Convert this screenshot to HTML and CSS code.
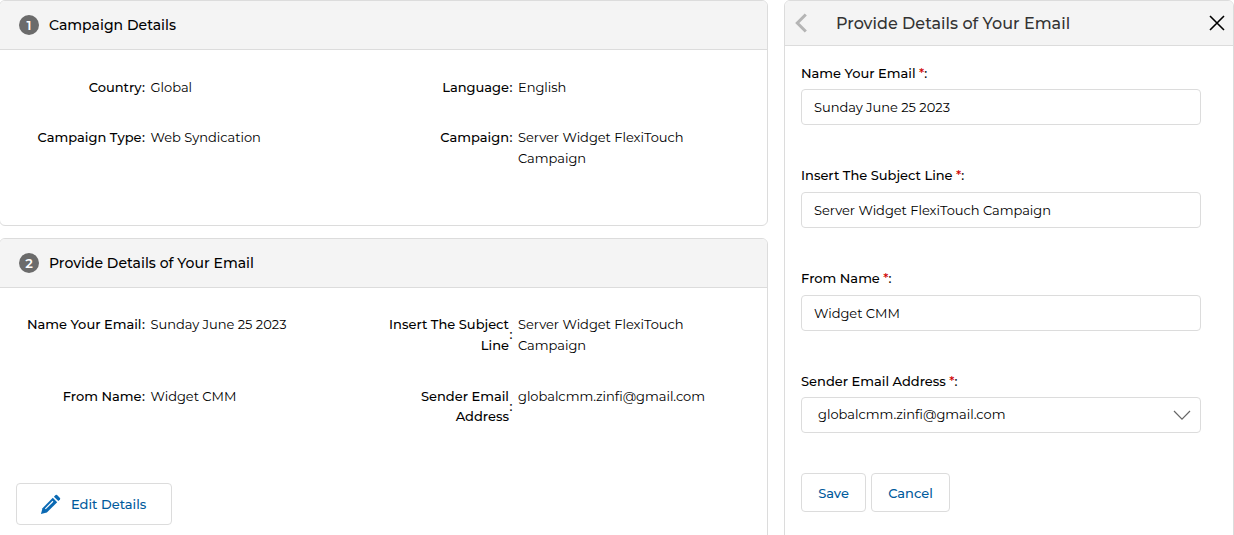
FILE: index.html
```html
<!DOCTYPE html>
<html lang="en">
    <head>
        <meta charset="utf-8">
        <meta name="viewport" content="width=device-width, initial-scale=1.0">
        <title>Provide Details of Your Email</title>
        <link rel="stylesheet" href="styles.css">
    </head>
    <body>
        <div class="page">
            <div class="summary">
                <section class="card campaign">
                    <div class="card-header">
                        <span class="step">1</span>
                        <h2>Campaign Details</h2>
                    </div>
                    <div class="details">
                        <div class="item">
                            <div class="name"><b>Country</b><i>:</i></div>
                            <span>Global</span>
                        </div>
                        <div class="item">
                            <div class="name"><b>Language</b><i>:</i></div>
                            <span>English</span>
                        </div>
                        <div class="item">
                            <div class="name"><b>Campaign Type</b><i>:</i></div>
                            <span>Web Syndication</span>
                        </div>
                        <div class="item">
                            <div class="name"><b>Campaign</b><i>:</i></div>
                            <span>Server Widget FlexiTouch Campaign</span>
                        </div>
                    </div>
                </section>

                <section class="card email">
                    <div class="card-header">
                        <span class="step">2</span>
                        <h2>Provide Details of Your Email</h2>
                    </div>
                    <div class="details">
                        <div class="item">
                            <div class="name"><b>Name Your Email</b><i>:</i></div>
                            <span>Sunday June 25 2023</span>
                        </div>
                        <div class="item">
                            <div class="name"><b>Insert The Subject Line</b><i>:</i></div>
                            <span>Server Widget FlexiTouch Campaign</span>
                        </div>
                        <div class="item">
                            <div class="name"><b>From Name</b><i>:</i></div>
                            <span>Widget CMM</span>
                        </div>
                        <div class="item">
                            <div class="name"><b>Sender Email Address</b><i>:</i></div>
                            <span>globalcmm.zinfi@gmail.com</span>
                        </div>
                    </div>
                    <button class="btn edit">
                        <svg width="21" height="21" viewBox="0 0 22 22">
                            <path d="M1 21l1.600-6.200L13.400 4l4.600 4.600L7.200 19.400z" fill="#0a69b3"/>
                            <path d="M14.600 2.800l1.700-1.700q.8-.6 1.600 0l3 3q.6.8 0 1.600l-1.700 1.700z" fill="#0a69b3"/>
                            <path d="M5.600 15.600L13.600 7.600" stroke="#fff" stroke-width="1.200"/>
                        </svg>
                        <span>Edit Details</span>
                    </button>
                </section>
            </div>

            <section class="card panel">
                <div class="panel-header">
                    <svg class="back" width="14" height="20" viewBox="0 0 14 20">
                        <path d="M11.800 1.500L3.300 10l8.500 8.500" fill="none" stroke="#b5b5b5" stroke-width="3"/>
                    </svg>
                    <h2>Provide Details of Your Email</h2>
                    <svg class="close" width="16" height="16" viewBox="0 0 16 16">
                        <path d="M1 1l14 14M15 1L1 15" stroke="#000" stroke-width="1.600"/>
                    </svg>
                </div>
                <form class="form">
                    <div class="field">
                        <label for="email-name">Name Your Email <em>*</em>:</label>
                        <input type="text" id="email-name" value="Sunday June 25 2023">
                    </div>
                    <div class="field">
                        <label for="subject">Insert The Subject Line <em>*</em>:</label>
                        <input type="text" id="subject" value="Server Widget FlexiTouch Campaign">
                    </div>
                    <div class="field">
                        <label for="from-name">From Name <em>*</em>:</label>
                        <input type="text" id="from-name" value="Widget CMM">
                    </div>
                    <div class="field sender">
                        <label>Sender Email Address <em>*</em>:</label>
                        <div class="select">
                            <span>globalcmm.zinfi@gmail.com</span>
                            <svg width="18" height="11" viewBox="0 0 18 11">
                                <path d="M1 1l8 8.200L17 1" fill="none" stroke="#666" stroke-width="1.200"/>
                            </svg>
                        </div>
                    </div>
                    <div class="actions">
                        <button type="button" class="btn save">Save</button>
                        <button type="button" class="btn cancel">Cancel</button>
                    </div>
                </form>
            </section>
        </div>
    </body>
</html>
```
FILE: styles.css
```css
* {
    box-sizing: border-box;
}
body {
    margin: 0;
    height: 535px;
    overflow: hidden;
    background: #fff;
    color: #000;
    font-family: Montserrat, Inter, "Liberation Sans", sans-serif;
    font-size: 13px;
    line-height: 20.8px;
}
h2 {
    margin: 0;
    font-weight: 500;
}
.page {
    display: flex;
    gap: 16px;
    margin-left: -1px;
}
.summary {
    width: 769px;
    display: flex;
    flex-direction: column;
    gap: 12px;
}
.card {
    border: 1px solid #dcdcdc;
    border-radius: 6px;
    overflow: hidden;
}
.campaign {
    height: 226px;
}
.email {
    height: 320px;
}
.card-header {
    display: flex;
    align-items: center;
    gap: 10px;
    height: 49px;
    padding-left: 19px;
    background: #f4f4f4;
    border-bottom: 1px solid #dcdcdc;
}
.card-header h2 {
    font-size: 14px;
    letter-spacing: 0.02px;
}
.step {
    width: 20px;
    height: 20px;
    border-radius: 50%;
    background: #6b6b6b;
    color: #fff;
    font-weight: 600;
    line-height: 21px;
    text-align: center;
}

/* label : value pairs */
.details {
    display: grid;
    grid-template-columns: 367.5px 367px;
    row-gap: 30px;
    margin-left: -0.5px;
    padding-top: 26px;
}
.campaign .details {
    padding-top: 27px;
    row-gap: 29px;
}
.item {
    display: flex;
    align-items: flex-start;
}
.name {
    display: flex;
    align-items: center;
    width: 146px;
    padding-left: 18px;
    font-weight: 500;
}
.name b {
    flex: 1;
    font-weight: 500;
    text-align: right;
}
.name i {
    width: 4px;
    font-style: normal;
    text-align: center;
}
.item span {
    width: 195px;
    margin-left: 5px;
    letter-spacing: -0.02px;
}

.btn {
    height: 39px;
    padding: 1px 0 0;
    border: 1px solid #dcdcdc;
    border-radius: 4px;
    background: #fff;
    color: #005a9c;
    font: inherit;
    font-weight: 500;
}
.edit {
    display: flex;
    align-items: center;
    gap: 10px;
    width: 156px;
    height: 42px;
    margin: 56px 0 0 16px;
    padding: 0 0 0 23px;
}

.panel {
    width: 450px;
    height: 546px;
}
.panel-header {
    display: flex;
    align-items: center;
    height: 45px;
    padding: 0 8px 0 9px;
    background: #f4f4f4;
    border-bottom: 1px solid #dcdcdc;
}
.panel-header h2 {
    flex: 1;
    margin-left: 28px;
    padding-top: 2px;
    color: #333;
    font-size: 16px;
    letter-spacing: 0.02px;
}
.form {
    padding: 17px 32px 0 16px;
}
.field {
    display: flow-root;
    height: 103px;
}
.field label {
    display: block;
    height: 26px;
    font-weight: 500;
}
.field + .field label {
    height: 27px;
    margin-top: -1px;
}
.field em {
    color: #d00000;
    font-style: normal;
}
.field input, .select {
    display: block;
    width: 100%;
    height: 36px;
    padding: 0 12px;
    border: 1px solid #dcdcdc;
    border-radius: 4px;
    background: #fff;
    color: #000;
    font-family: inherit;
    font-size: 13px;
    letter-spacing: -0.02px;
}
.field .select {
    display: flex;
    align-items: center;
    justify-content: space-between;
    padding: 0 9px 0 16px;
    letter-spacing: 0;
}
.select span {
    margin-top: -2px;
}
.field.sender label {
    height: 26px;
}
.actions {
    display: flex;
    gap: 5px;
    margin-top: -2px;
}
.save {
    width: 65px;
}
.cancel {
    width: 79px;
}
```
